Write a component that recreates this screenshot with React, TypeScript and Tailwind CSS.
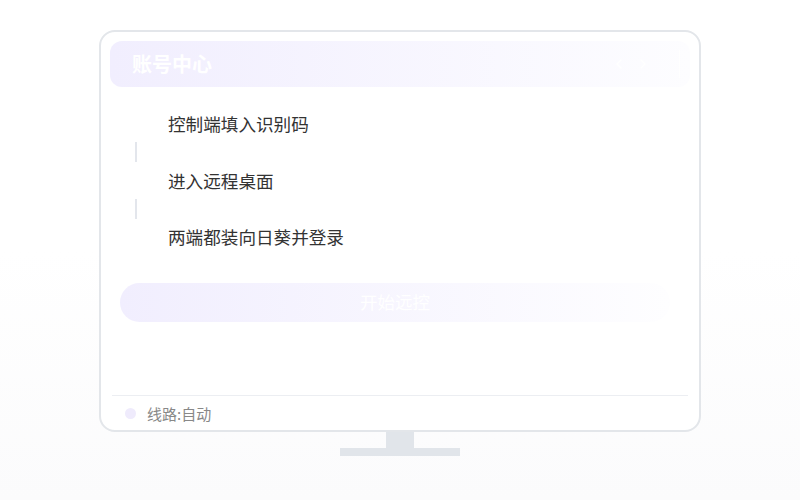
import { ChevronLeft, ChevronRight } from "lucide-react";

const STEPS = ["控制端填入识别码", "进入远程桌面", "两端都装向日葵并登录"];

export default function App() {
  return (
    <div
      className="w-[800px] h-[500px] flex flex-col items-center bg-gradient-to-b from-white from-50% to-[#fbfbfc] pt-[30px]"
      style={{ fontFamily: '"Noto Sans CJK SC", "Noto Sans", sans-serif' }}
    >
      {/* Screen */}
      <div className="w-[602px] h-[402px] rounded-[16px] border-2 border-[#e3e6ea] bg-white flex flex-col p-[9px] pb-0">
        {/* Header bar */}
        <div className="h-[46px] rounded-[12px] bg-gradient-to-r from-[#f1eefe] to-[#fdfdff] flex items-center justify-between pl-[22px] pr-[10px]">
          <span className="text-white text-[20px] font-bold leading-none">账号中心</span>
          <div className="flex items-center gap-2 text-white">
            <ChevronLeft className="w-4 h-4" strokeWidth={2} />
            <ChevronRight className="w-4 h-4" strokeWidth={2} />
            <div className="w-px h-7 bg-white ml-5" />
          </div>
        </div>

        {/* Steps */}
        <div className="flex flex-col pl-[58px] mt-[25px]">
          {STEPS.map((step, i) => (
            <div key={step} className="flex flex-col">
              <span className="text-[17.6px] leading-[24px] text-[#333]">{step}</span>
              {i < STEPS.length - 1 && (
                <div className="h-[32.5px] flex items-center -ml-[33px]">
                  <div className="w-[2px] h-[20px] bg-[#e3e6ec]" />
                </div>
              )}
            </div>
          ))}
        </div>

        {/* Start button */}
        <div className="mt-[34px] pl-[10px] pr-[20px]">
          <button className="w-full h-[39px] rounded-full bg-gradient-to-r from-[#f1eefe] to-[#fefeff] text-white text-[17.5px] flex items-center justify-center">
            开始远控
          </button>
        </div>

        <div className="flex-1" />

        {/* Footer */}
        <div className="border-t border-[#eceef2] h-[35px] flex items-center gap-[11px] pl-[13px] mx-[2px]">
          <div className="w-[11px] h-[11px] rounded-full bg-[#efebfc]" />
          <span className="text-[15px] text-[#888] leading-none">线路:自动</span>
        </div>
      </div>

      {/* Stand */}
      <div className="w-[28px] h-[16px] bg-[#e1e5ea]" />
      <div className="w-[120px] h-[8px] bg-[#e1e5ea]" />
    </div>
  );
}
